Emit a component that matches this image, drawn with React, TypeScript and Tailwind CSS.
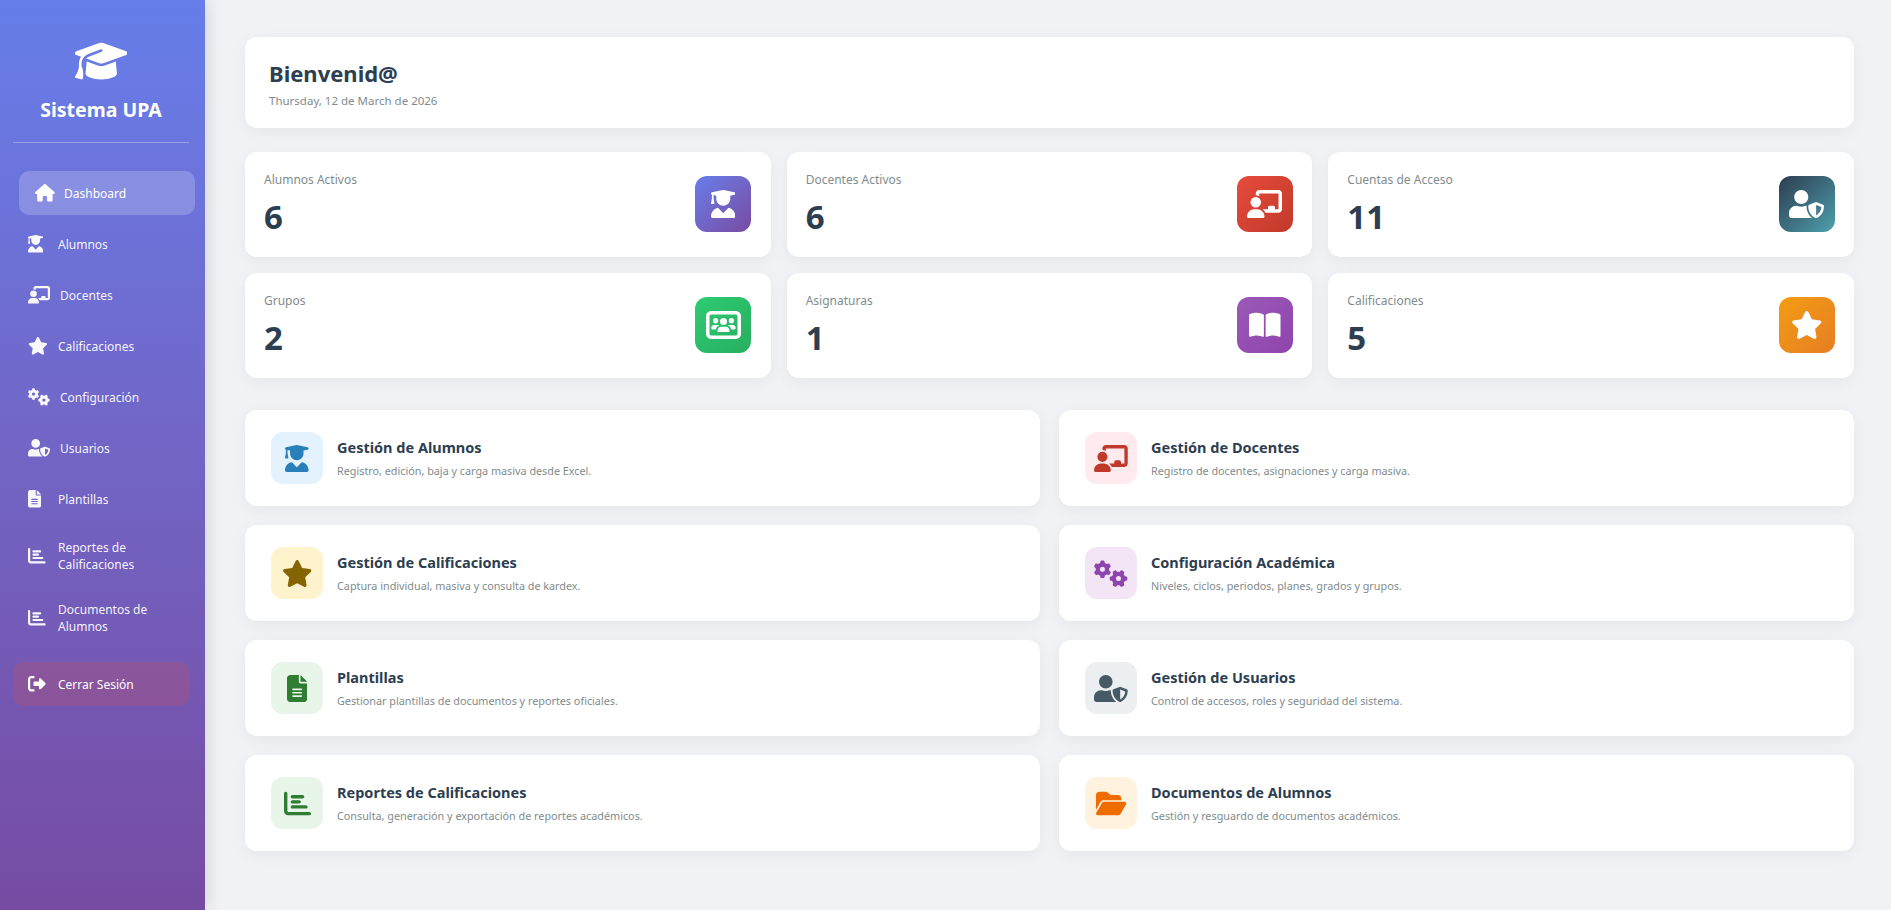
import type { ReactNode } from "react";
import { FaStar, FaUserShield } from "react-icons/fa";
import {
  FaGraduationCap,
  FaHouse,
  FaUserGraduate,
  FaChalkboardUser,
  FaGears,
  FaFileLines,
  FaChartBar,
  FaRightFromBracket,
  FaUsersRectangle,
  FaBookOpen,
  FaFolderOpen,
} from "react-icons/fa6";

type NavEntry = { icon: ReactNode; label: string; active?: boolean };

const navItems: NavEntry[] = [
  { icon: <FaHouse className="h-[17.6px] w-[19.8px]" />, label: "Dashboard", active: true },
  { icon: <FaUserGraduate className="h-[17.6px] w-[15.4px]" />, label: "Alumnos" },
  { icon: <FaChalkboardUser className="h-[17.6px] w-[22px]" />, label: "Docentes" },
  { icon: <FaStar className="h-[17.6px] w-[19.8px]" />, label: "Calificaciones" },
  { icon: <FaGears className="h-[17.6px] w-[22px]" />, label: "Configuración" },
  { icon: <FaUserShield className="h-[17.6px] w-[22px]" />, label: "Usuarios" },
  { icon: <FaFileLines className="h-[17.6px] w-[13.2px]" />, label: "Plantillas" },
  { icon: <FaChartBar className="h-[17.6px] w-[17.6px]" />, label: "Reportes de Calificaciones" },
  { icon: <FaChartBar className="h-[17.6px] w-[17.6px]" />, label: "Documentos de Alumnos" },
];

const stats = [
  { label: "Alumnos Activos", value: "6", icon: <FaUserGraduate className="h-[28px] w-[24.5px]" />, bg: "bg-gradient-to-br from-[#667eea] to-[#764ba2]" },
  { label: "Docentes Activos", value: "6", icon: <FaChalkboardUser className="h-[28px] w-[35px]" />, bg: "bg-gradient-to-br from-[#e74c3c] to-[#c0392b]" },
  { label: "Cuentas de Acceso", value: "11", icon: <FaUserShield className="h-[28px] w-[35px]" />, bg: "bg-gradient-to-br from-[#2c3e50] to-[#4ca1af]" },
  { label: "Grupos", value: "2", icon: <FaUsersRectangle className="h-[28px] w-[35px]" />, bg: "bg-gradient-to-br from-[#2ecc71] to-[#27ae60]" },
  { label: "Asignaturas", value: "1", icon: <FaBookOpen className="h-[28px] w-[31.5px]" />, bg: "bg-gradient-to-br from-[#9b59b6] to-[#8e44ad]" },
  { label: "Calificaciones", value: "5", icon: <FaStar className="h-[28px] w-[31.5px]" />, bg: "bg-gradient-to-br from-[#f39c12] to-[#e67e22]" },
];

const actions = [
  { title: "Gestión de Alumnos", desc: "Registro, edición, baja y carga masiva desde Excel.", icon: <FaUserGraduate className="h-[27px] w-[23.6px]" />, box: "bg-[#e3f2fd] text-[#2980b9]" },
  { title: "Gestión de Docentes", desc: "Registro de docentes, asignaciones y carga masiva.", icon: <FaChalkboardUser className="h-[27px] w-[33.75px]" />, box: "bg-[#ffebee] text-[#c0392b]" },
  { title: "Gestión de Calificaciones", desc: "Captura individual, masiva y consulta de kardex.", icon: <FaStar className="h-[27px] w-[30.4px]" />, box: "bg-[#fff3cd] text-[#856404]" },
  { title: "Configuración Académica", desc: "Niveles, ciclos, periodos, planes, grados y grupos.", icon: <FaGears className="h-[27px] w-[33.75px]" />, box: "bg-[#f3e5f5] text-[#8e44ad]" },
  { title: "Plantillas", desc: "Gestionar plantillas de documentos y reportes oficiales.", icon: <FaFileLines className="h-[27px] w-[20.25px]" />, box: "bg-[#e8f5e9] text-[#2e7d32]" },
  { title: "Gestión de Usuarios", desc: "Control de accesos, roles y seguridad del sistema.", icon: <FaUserShield className="h-[27px] w-[33.75px]" />, box: "bg-[#eceff1] text-[#455a64]" },
  { title: "Reportes de Calificaciones", desc: "Consulta, generación y exportación de reportes académicos.", icon: <FaChartBar className="h-[27px] w-[27px]" />, box: "bg-[#e8f5e9] text-[#2e7d32]" },
  { title: "Documentos de Alumnos", desc: "Gestión y resguardo de documentos académicos.", icon: <FaFolderOpen className="h-[27px] w-[30.4px]" />, box: "bg-[#fff3e0] text-[#ef6c00]" },
];

function NavItem({ icon, label, active }: NavEntry) {
  return (
    <div
      className={
        active
          ? "ml-[6px] -mr-[6px] flex items-center rounded-[10px] bg-white/20 px-[16px] py-[10.5px] text-[12px] leading-[17px] text-white"
          : "flex items-center rounded-[10px] px-[15px] py-[10.5px] text-[12px] leading-[17px] text-white/95"
      }
    >
      <span className={active ? "mr-[9px] flex h-[23px] min-w-[20px] items-center" : "mr-[10px] flex h-[23px] min-w-[20px] items-center"}>{icon}</span>
      <span>{label}</span>
    </div>
  );
}

export default function App() {
  return (
    <div className="flex min-h-[910px] w-full bg-[#f0f2f5] font-['Noto_Sans','Open_Sans',sans-serif]">
      <aside className="z-10 flex w-[205px] shrink-0 flex-col bg-gradient-to-b from-[#667eea] to-[#764ba2] pl-[13px] pr-[16px] shadow-[4px_0_15px_rgba(0,0,0,0.1)]">
        <div className="flex flex-col items-center border-b border-white/30 pb-[17px] pt-[40px] text-white">
          <FaGraduationCap className="h-[42px] w-[52.5px]" />
          <div className="mt-[13px] text-[19.5px] font-bold leading-[30px]">Sistema UPA</div>
        </div>
        <nav className="mt-[28px] flex flex-col gap-[7px]">
          {navItems.map((n) => (
            <NavItem key={n.label} {...n} />
          ))}
        </nav>
        <div className="mt-[17px] flex items-center rounded-[10px] bg-[rgba(231,76,60,0.2)] px-[15px] py-[10.5px] text-[12px] leading-[17px] text-white">
          <span className="mr-[10px] flex h-[23px] min-w-[20px] items-center">
            <FaRightFromBracket className="h-[17.6px] w-[17.6px]" />
          </span>
          <span>Cerrar Sesión</span>
        </div>
      </aside>

      <main className="min-w-0 flex-1 pb-[59px] pl-[40px] pr-[37px] pt-[37px]">
        <section className="flex h-[91px] flex-col justify-center rounded-[12px] bg-white px-[24px] shadow-[0_4px_15px_rgba(0,0,0,0.05)]">
          <h1 className="text-[22px] font-bold leading-[32px] text-[#2c3e50]">Bienvenid@</h1>
          <p className="mt-[4px] text-[11.5px] leading-[16px] text-[#7f8c8d]">Thursday, 12 de March de 2026</p>
        </section>

        <section className="mt-[24px] grid grid-cols-3 gap-[16px]">
          {stats.map((s) => (
            <div key={s.label} className="flex h-[105px] items-center justify-between rounded-[12px] bg-white pl-[19px] pr-[19.5px] shadow-[0_4px_15px_rgba(0,0,0,0.05)]">
              <div className="mt-[2px]">
                <div className="text-[12px] leading-[16px] text-[#7f8c8d]">{s.label}</div>
                <div className="mt-[7px] text-[33px] font-bold leading-[44px] text-[#2c3e50]">{s.value}</div>
              </div>
              <div className={`-mt-[1px] flex h-[56px] w-[56px] items-center justify-center rounded-[12px] text-white ${s.bg}`}>{s.icon}</div>
            </div>
          ))}
        </section>

        <section className="mt-[32px] grid grid-cols-2 gap-[19px]">
          {actions.map((a) => (
            <div key={a.title} className="flex h-[96px] items-center gap-[14px] rounded-[12px] bg-white px-[26px] shadow-[0_4px_15px_rgba(0,0,0,0.05)]">
              <div className={`flex h-[52px] w-[52px] shrink-0 items-center justify-center rounded-[12px] ${a.box}`}>{a.icon}</div>
              <div>
                <div className="text-[14.5px] font-bold leading-[20px] text-[#2c3e50]">{a.title}</div>
                <div className="mt-[6px] text-[10.8px] leading-[16px] text-[#7f8c8d]">{a.desc}</div>
              </div>
            </div>
          ))}
        </section>
      </main>
    </div>
  );
}
